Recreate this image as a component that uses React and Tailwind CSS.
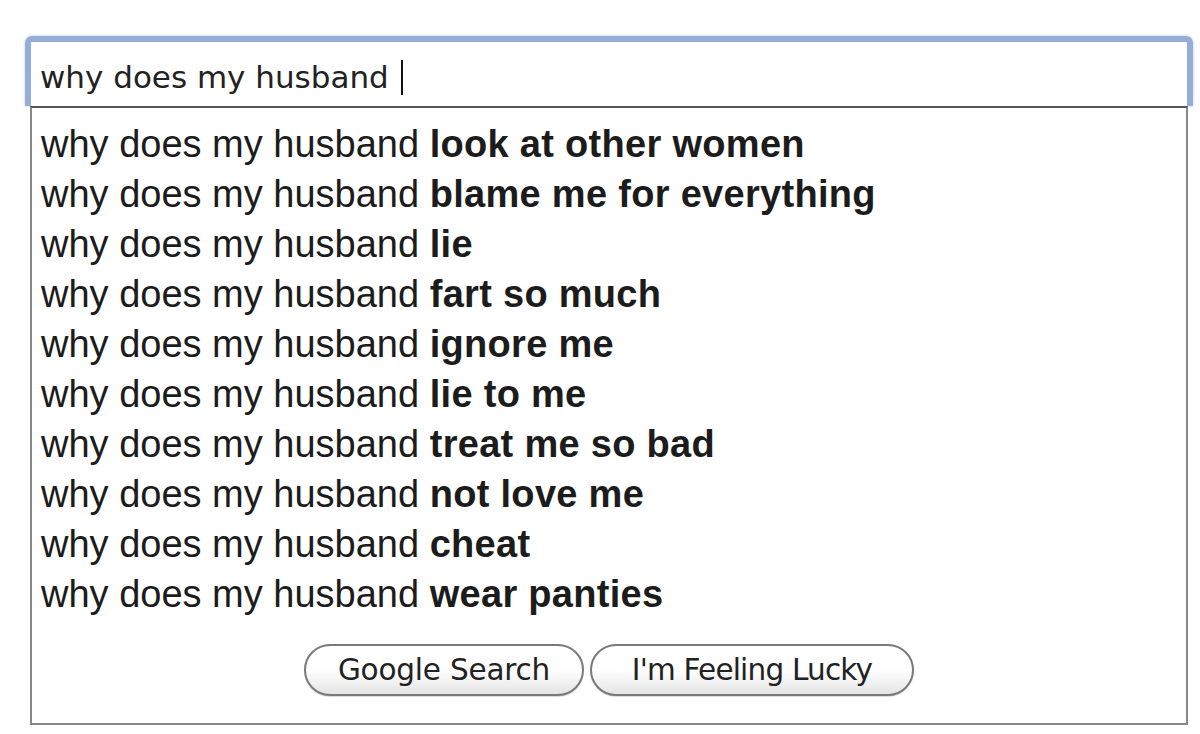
import React from 'react';

const base = 'why does my husband';

const suggestions = [
    'look at other women',
    'blame me for everything',
    'lie',
    'fart so much',
    'ignore me',
    'lie to me',
    'treat me so bad',
    'not love me',
    'cheat',
    'wear panties',
];

const App = () => {
    return (
        <div className="w-[1200px] h-[734px] bg-white overflow-hidden pt-[36px] pl-[25px]">
            <div className="w-[1168px]">
                {/* search input with focus ring */}
                <div className="h-[70px] border-[6px] border-b-0 border-[#94aed8] rounded-t-[7px] bg-white flex items-center pl-[9px] pt-[6px] shadow-[0_0_3px_rgba(120,150,200,0.5)]">
                    <span
                        className="text-[31px] text-[#222]"
                        style={{ fontFamily: '"DejaVu Sans", "Liberation Sans", sans-serif' }}
                    >
                        {base}
                    </span>
                    <span className="ml-[12px] w-[2px] h-[35px] bg-[#111]" />
                </div>

                {/* suggestion dropdown */}
                <div className="mx-[5px] border-2 border-[#888] border-t-[#555] bg-white pt-[11px] pb-[27px]">
                    <ul style={{ fontFamily: '"Liberation Sans", Arial, sans-serif' }}>
                        {suggestions.map((s) => (
                            <li key={s} className="h-[50px] leading-[50px] pl-[9px] text-[38px] text-[#1c1c1c] whitespace-nowrap">
                                {base} <b className="font-bold tracking-[0.3px]">{s}</b>
                            </li>
                        ))}
                    </ul>
                    <div
                        className="flex justify-center gap-[6px] mt-[25px]"
                        style={{ fontFamily: '"DejaVu Sans", "Liberation Sans", sans-serif' }}
                    >
                        <button className="w-[280px] h-[52px] rounded-full border-2 border-[#7a7a7a] bg-gradient-to-b from-white via-white to-[#e4e4e4] text-[29.5px] text-[#222] tracking-[-0.2px] shadow-[0_1px_1px_rgba(0,0,0,0.15)] whitespace-nowrap">
                            Google Search
                        </button>
                        <button className="w-[324px] h-[52px] rounded-full border-2 border-[#7a7a7a] bg-gradient-to-b from-white via-white to-[#e4e4e4] text-[29.5px] text-[#222] tracking-[-0.8px] shadow-[0_1px_1px_rgba(0,0,0,0.15)] whitespace-nowrap">
                            I'm Feeling Lucky
                        </button>
                    </div>
                </div>
            </div>
        </div>
    );
};

export default App;
